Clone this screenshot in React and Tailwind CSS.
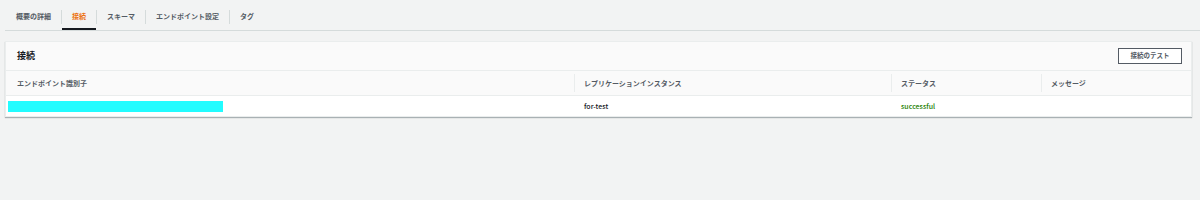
const tabs = ["概要の詳細", "接続", "スキーマ", "エンドポイント設定", "タグ"];

const font = { fontFamily: '"Noto Sans CJK JP", "Noto Sans", sans-serif' };

export default function App() {
  return (
    <div className="h-[200px] w-[1200px] bg-[#f2f3f3] text-[#16191f]" style={font}>
      {/* tabs */}
      <div className="ml-[5px] flex h-[31px] border-b border-[#d5dbdb] pl-[1px] pt-[9px]">
        {tabs.map((t, i) => (
          <div key={t} className="flex items-start">
            {i > 0 && <div className="mt-[1px] h-[14px] w-px bg-[#d5dbdb]" />}
            <div
              className={
                "h-[21px] px-[10px] text-[7px] font-bold leading-[14px] " +
                (t === "接続"
                  ? "border-b-2 border-[#16191f] text-[#ec7211]"
                  : "text-[#545b64]")
              }
            >
              {t}
            </div>
          </div>
        ))}
      </div>

      {/* panel */}
      <div className="ml-[5px] mt-[10px] w-[1187px] border border-[#eaeded] bg-white shadow-[0_1px_1px_rgba(0,28,36,0.3)]">
        <div className="flex h-[29px] items-center justify-between border-b border-[#eaeded] bg-[#fafafa] pl-[11px] pr-[9px]">
          <span className="text-[9px] font-bold">接続</span>
          <button className="h-[16px] w-[64px] border border-[#545b64] bg-white text-[6.5px] font-bold text-[#545b64]">
            接続のテスト
          </button>
        </div>
        <div className="grid h-[25px] grid-cols-[568px_317px_150px_1fr] items-center border-b border-[#eaeded] bg-[#fafafa] text-[7px] font-bold text-[#545b64]">
          <div className="pl-[11px]">エンドポイント識別子</div>
          <div className="border-l border-[#eaeded] pl-[9px] leading-[18px]">レプリケーションインスタンス</div>
          <div className="border-l border-[#eaeded] pl-[9px] leading-[18px]">ステータス</div>
          <div className="border-l border-[#eaeded] pl-[9px] leading-[18px]">メッセージ</div>
        </div>
        <div className="grid h-[20px] grid-cols-[568px_317px_150px_1fr] items-center text-[7px] font-medium">
          <div className="pl-[2px]">
            <div className="h-[11px] w-[215px] bg-[#22fcff]" />
          </div>
          <div className="pl-[10px]">for-test</div>
          <div className="pl-[10px] text-[#1d8102]">successful</div>
          <div />
        </div>
      </div>
    </div>
  );
}
